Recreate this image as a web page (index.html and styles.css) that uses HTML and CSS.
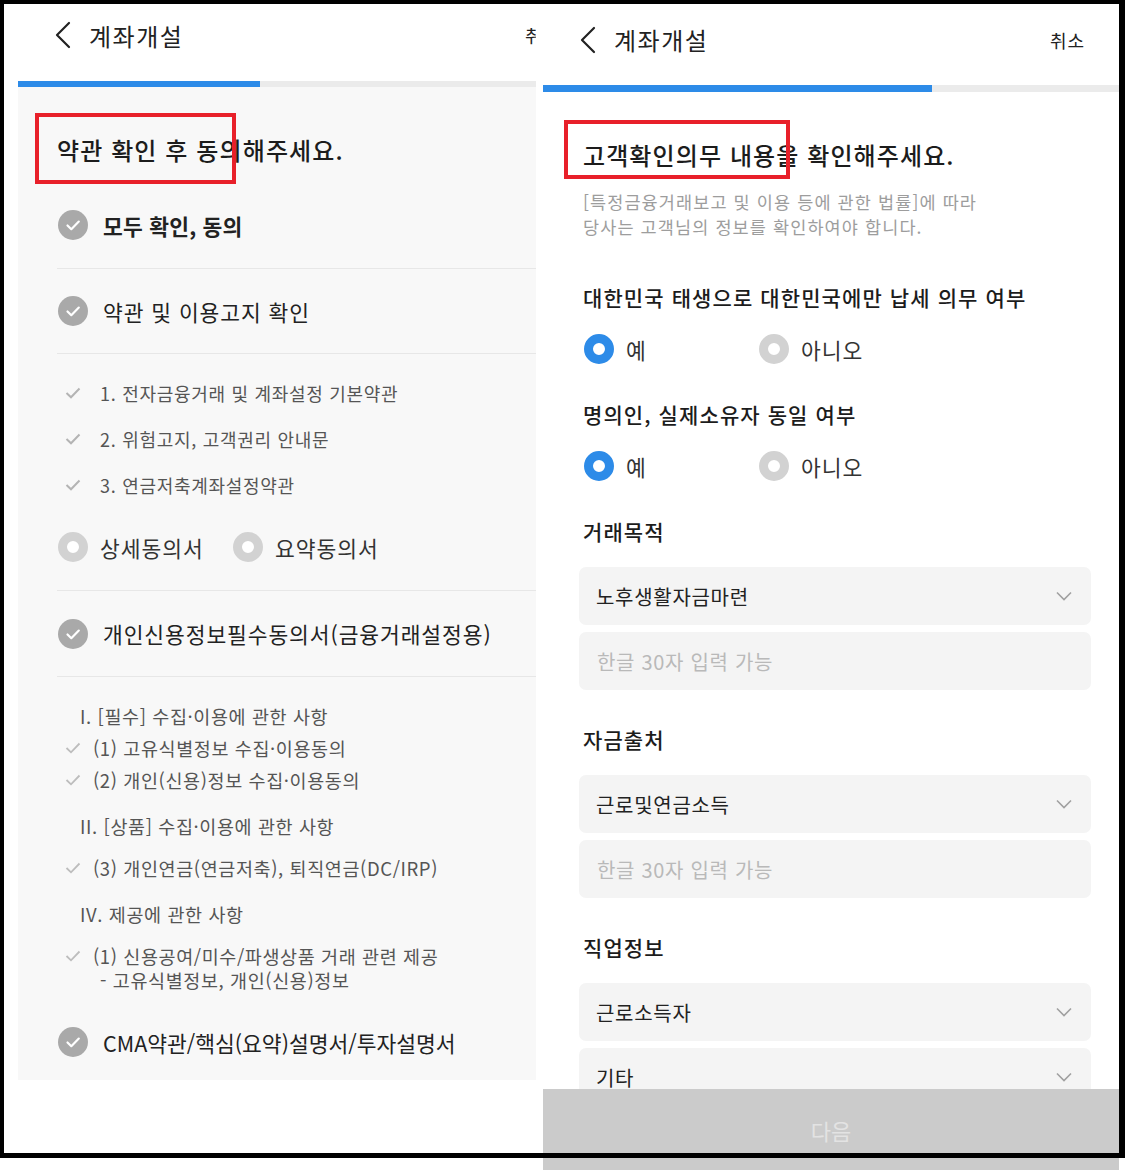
FILE: index.html
```html
<!DOCTYPE html>
<html lang="ko">
<head>
    <meta charset="UTF-8">
    <meta name="viewport" content="width=device-width, initial-scale=1.0">
    <title>계좌개설</title>
    <link rel="stylesheet" href="styles.css">
</head>
<body>
    <div class="stage">
        <div class="panels">

            <!-- 약관 동의 화면 -->
            <section class="phone phone-terms">
                <div class="phone-inner">
                    <header class="topbar">
                        <button class="back" aria-label="뒤로">
                            <svg width="18" height="28" viewBox="0 0 18 28"><path d="M15 2 L3 14 L15 26" fill="none" stroke="#222" stroke-width="2.2" stroke-linecap="round" stroke-linejoin="round"/></svg>
                        </button>
                        <h1 class="topbar-title">계좌개설</h1>
                        <span class="topbar-cancel">취소</span>
                    </header>
                    <div class="progress"><div class="progress-fill" style="width: 42%"></div></div>

                    <main class="terms">
                        <h2 class="page-title">약관 확인 후 동의해주세요.</h2>

                        <div class="agree-row agree-all">
                            <span class="check-circle"><svg width="30" height="30" viewBox="0 0 30 30"><circle cx="15" cy="15" r="15" fill="#a9a9a9"/><path d="M9.5 15.5 L13.3 19.2 L20.8 11.6" fill="none" stroke="#fff" stroke-width="2.2" stroke-linecap="round" stroke-linejoin="round"/></svg></span>
                            <span class="agree-text">모두 확인, 동의</span>
                        </div>

                        <div class="agree-row agree-notice">
                            <span class="check-circle"><svg width="30" height="30" viewBox="0 0 30 30"><circle cx="15" cy="15" r="15" fill="#a9a9a9"/><path d="M9.5 15.5 L13.3 19.2 L20.8 11.6" fill="none" stroke="#fff" stroke-width="2.2" stroke-linecap="round" stroke-linejoin="round"/></svg></span>
                            <span class="agree-text">약관 및 이용고지 확인</span>
                        </div>

                        <ul class="sub-list">
                            <li><svg class="tick" width="16" height="12" viewBox="0 0 16 12"><path d="M1.5 6 L6 10.3 L14.5 1.5" fill="none" stroke="#b4b4b4" stroke-width="2"/></svg>1. 전자금융거래 및 계좌설정 기본약관</li>
                            <li><svg class="tick" width="16" height="12" viewBox="0 0 16 12"><path d="M1.5 6 L6 10.3 L14.5 1.5" fill="none" stroke="#b4b4b4" stroke-width="2"/></svg>2. 위험고지, 고객권리 안내문</li>
                            <li><svg class="tick" width="16" height="12" viewBox="0 0 16 12"><path d="M1.5 6 L6 10.3 L14.5 1.5" fill="none" stroke="#b4b4b4" stroke-width="2"/></svg>3. 연금저축계좌설정약관</li>
                        </ul>

                        <div class="agree-row doc-type">
                            <label class="radio"><span class="radio-dot"></span>상세동의서</label>
                            <label class="radio"><span class="radio-dot"></span>요약동의서</label>
                        </div>

                        <div class="agree-row agree-credit">
                            <span class="check-circle"><svg width="30" height="30" viewBox="0 0 30 30"><circle cx="15" cy="15" r="15" fill="#a9a9a9"/><path d="M9.5 15.5 L13.3 19.2 L20.8 11.6" fill="none" stroke="#fff" stroke-width="2.2" stroke-linecap="round" stroke-linejoin="round"/></svg></span>
                            <span class="agree-text">개인신용정보필수동의서(금융거래설정용)</span>
                        </div>

                        <div class="detail-list">
                            <p class="detail-head">I. [필수] 수집·이용에 관한 사항</p>
                            <p class="detail-item"><svg class="tick" width="16" height="12" viewBox="0 0 16 12"><path d="M1.5 6 L6 10.3 L14.5 1.5" fill="none" stroke="#bdbdbd" stroke-width="1.8"/></svg>(1) 고유식별정보 수집·이용동의</p>
                            <p class="detail-item"><svg class="tick" width="16" height="12" viewBox="0 0 16 12"><path d="M1.5 6 L6 10.3 L14.5 1.5" fill="none" stroke="#bdbdbd" stroke-width="1.8"/></svg>(2) 개인(신용)정보 수집·이용동의</p>
                            <p class="detail-head gap">II. [상품] 수집·이용에 관한 사항</p>
                            <p class="detail-item gap-sm"><svg class="tick" width="16" height="12" viewBox="0 0 16 12"><path d="M1.5 6 L6 10.3 L14.5 1.5" fill="none" stroke="#bdbdbd" stroke-width="1.8"/></svg>(3) 개인연금(연금저축), 퇴직연금(DC/IRP)</p>
                            <p class="detail-head gap">IV. 제공에 관한 사항</p>
                            <div class="detail-item two-line">
                                <svg class="tick" width="16" height="12" viewBox="0 0 16 12"><path d="M1.5 6 L6 10.3 L14.5 1.5" fill="none" stroke="#bdbdbd" stroke-width="1.8"/></svg>
                                <div>
                                    <span class="line">(1) 신용공여/미수/파생상품 거래 관련 제공</span>
                                    <span class="line indent">- 고유식별정보, 개인(신용)정보</span>
                                </div>
                            </div>
                        </div>

                        <div class="agree-row agree-cma">
                            <span class="check-circle"><svg width="30" height="30" viewBox="0 0 30 30"><circle cx="15" cy="15" r="15" fill="#a9a9a9"/><path d="M9.5 15.5 L13.3 19.2 L20.8 11.6" fill="none" stroke="#fff" stroke-width="2.2" stroke-linecap="round" stroke-linejoin="round"/></svg></span>
                            <span class="agree-text">CMA약관/핵심(요약)설명서/투자설명서</span>
                        </div>
                    </main>
                </div>
            </section>

            <!-- 고객확인의무 화면 -->
            <section class="phone phone-kyc">
                <header class="topbar topbar-kyc">
                    <button class="back" aria-label="뒤로">
                        <svg width="18" height="28" viewBox="0 0 18 28"><path d="M15 2 L3 14 L15 26" fill="none" stroke="#222" stroke-width="2.2" stroke-linecap="round" stroke-linejoin="round"/></svg>
                    </button>
                    <h1 class="topbar-title">계좌개설</h1>
                    <span class="topbar-cancel">취소</span>
                </header>
                <div class="progress progress-kyc"><div class="progress-fill" style="width: 67.5%"></div></div>

                <main class="kyc">
                    <h2 class="page-title">고객확인의무 내용을 확인해주세요.</h2>
                    <p class="desc">[특정금융거래보고 및 이용 등에 관한 법률]에 따라<br>당사는 고객님의 정보를 확인하여야 합니다.</p>

                    <h3 class="label label-first">대한민국 태생으로 대한민국에만 납세 의무 여부</h3>
                    <div class="radio-group">
                        <label class="radio"><span class="radio-dot on"></span>예</label>
                        <label class="radio"><span class="radio-dot"></span>아니오</label>
                    </div>

                    <h3 class="label">명의인, 실제소유자 동일 여부</h3>
                    <div class="radio-group">
                        <label class="radio"><span class="radio-dot on"></span>예</label>
                        <label class="radio"><span class="radio-dot"></span>아니오</label>
                    </div>

                    <h3 class="label">거래목적</h3>
                    <div class="field select">노후생활자금마련<svg width="16" height="10" viewBox="0 0 16 10"><path d="M1 1.5 L8 8.5 L15 1.5" fill="none" stroke="#a0a0a0" stroke-width="1.6"/></svg></div>
                    <div class="field input">한글 30자 입력 가능</div>

                    <h3 class="label label-mid">자금출처</h3>
                    <div class="field select">근로및연금소득<svg width="16" height="10" viewBox="0 0 16 10"><path d="M1 1.5 L8 8.5 L15 1.5" fill="none" stroke="#a0a0a0" stroke-width="1.6"/></svg></div>
                    <div class="field input">한글 30자 입력 가능</div>

                    <h3 class="label label-mid">직업정보</h3>
                    <div class="field select">근로소득자<svg width="16" height="10" viewBox="0 0 16 10"><path d="M1 1.5 L8 8.5 L15 1.5" fill="none" stroke="#a0a0a0" stroke-width="1.6"/></svg></div>
                    <div class="field select">기타<svg width="16" height="10" viewBox="0 0 16 10"><path d="M1 1.5 L8 8.5 L15 1.5" fill="none" stroke="#a0a0a0" stroke-width="1.6"/></svg></div>
                </main>

                <button class="next-btn" disabled>다음</button>
            </section>
        </div>

        <!-- 강조 표시 -->
        <div class="mark mark-left"></div>
        <div class="mark mark-right"></div>
        <div class="frame"></div>
    </div>
</body>
</html>
```

FILE: styles.css
```css
/* General styles */
body {
    margin: 0;
    background-color: #fff;
    font-family: 'Noto Sans CJK KR', 'Noto Sans', sans-serif;
    color: #222;
}

.stage {
    position: relative;
    width: 1125px;
    height: 1175px;
    overflow: hidden;
}

.panels {
    display: flex;
    align-items: flex-start;
    gap: 7px;
    padding-left: 18px;
}

.phone {
    overflow: hidden;
    background-color: #fff;
}

.phone-terms {
    width: 518px;
}

.phone-inner {
    width: 576px;
}

.phone-kyc {
    position: relative;
    width: 576px;
    height: 1170px;
}

/* Top bar */
.topbar {
    display: flex;
    align-items: center;
    height: 70px;
    padding: 0 34px 0 36px;
}

.topbar-kyc {
    height: 79px;
}

.back {
    display: flex;
    background: none;
    border: none;
    padding: 0;
    margin-right: 17px;
    cursor: pointer;
}

.topbar-title {
    flex: 1;
    margin: 0;
    font-size: 24px;
    font-weight: 400;
    letter-spacing: 1.5px;
    color: #222;
}

.topbar-cancel {
    font-size: 18px;
    letter-spacing: 1px;
    color: #222;
}

.progress {
    height: 6px;
    margin-top: 11px;
    background-color: #ebebeb;
}

.progress-kyc {
    height: 7px;
    margin-top: 6px;
}

.progress-fill {
    height: 100%;
    background-color: #2d8be8;
}

.page-title {
    margin: 0;
    font-size: 24px;
    line-height: 34px;
    font-weight: 500;
    letter-spacing: 1.1px;
    color: #1c1c1c;
}

/* Terms screen */
.terms {
    background-color: #f8f8f8;
    padding: 46px 0 20px 39px;
}

.terms .page-title {
    margin-bottom: 15px;
}

.agree-row {
    display: flex;
    align-items: center;
    border-bottom: 1px solid #e7e7e7;
}

.check-circle {
    display: flex;
    margin: 0 15px 0 1px;
}

.agree-text {
    font-size: 21.5px;
    letter-spacing: 0.9px;
    color: #222;
}

.agree-all {
    height: 86px;
}

.agree-all .agree-text {
    font-weight: 700;
    letter-spacing: 0.2px;
}

.agree-notice {
    height: 84px;
}

.agree-credit {
    height: 85px;
}

.agree-cma {
    height: 36px;
    margin-top: 32px;
    border-bottom: none;
}

.agree-cma .agree-text {
    letter-spacing: 0;
}

.sub-list {
    list-style: none;
    margin: 0;
    padding: 16px 0 0;
}

.sub-list li {
    display: flex;
    align-items: center;
    height: 46px;
    font-size: 18px;
    letter-spacing: 0.7px;
    color: #555;
}

.tick {
    margin: 0 19px 0 8px;
    flex-shrink: 0;
}

.doc-type {
    height: 78px;
    padding-bottom: 4px;
}

.radio {
    display: flex;
    align-items: center;
    width: 175px;
    font-size: 21.5px;
    letter-spacing: 1px;
    color: #333;
}

.radio-dot {
    box-sizing: border-box;
    width: 30px;
    height: 30px;
    margin: 0 12px 0 1px;
    border: 9.5px solid #d2d2d2;
    border-radius: 50%;
    background-color: #fff;
}

.radio-dot.on {
    border-color: #2d8be8;
}

.detail-list {
    padding-top: 23px;
}

.detail-list p {
    margin: 0;
}

.detail-head {
    height: 32px;
    line-height: 32px;
    padding-left: 23px;
    font-size: 18.5px;
    letter-spacing: 0.6px;
    color: #555;
}

.detail-item {
    display: flex;
    align-items: center;
    height: 32px;
    font-size: 18.5px;
    letter-spacing: 0.6px;
    color: #555;
}

.detail-item .tick {
    margin-right: 12px;
}

.detail-head.gap {
    margin-top: 14px;
}

.detail-item.gap-sm {
    margin-top: 10px;
}

.detail-item.two-line {
    align-items: flex-start;
    height: auto;
    margin-top: 14px;
}

.two-line .tick {
    margin-top: 6px;
}

.two-line .line {
    display: block;
    line-height: 24px;
}

.two-line .indent {
    padding-left: 7px;
}

/* KYC screen */
.kyc {
    padding: 46px 28px 0 36px;
}

.kyc .page-title,
.kyc .desc,
.kyc .label,
.kyc .radio-group {
    padding-left: 4px;
}

.desc {
    margin: 17px 0 0;
    font-size: 17.5px;
    line-height: 25px;
    letter-spacing: 1.1px;
    color: #9d9d9d;
}

.label {
    margin: 32px 0 0;
    font-size: 21px;
    line-height: 30px;
    font-weight: 500;
    letter-spacing: 1.1px;
    color: #1c1c1c;
}

.label-first {
    margin-top: 43px;
}

.label-mid {
    margin-top: 34px;
}

.radio-group {
    display: flex;
    align-items: center;
    height: 36px;
    margin-top: 19px;
}

.radio-group + .label {
    margin-top: 32px;
}

.field {
    display: flex;
    align-items: center;
    justify-content: space-between;
    height: 58px;
    margin-top: 7px;
    padding: 0 19px 0 17px;
    border-radius: 7px;
    background-color: #f4f4f4;
    font-size: 20px;
    letter-spacing: 0.7px;
    color: #222;
}

.label + .field {
    margin-top: 21px;
}

.field.input {
    padding-left: 18px;
    color: #b9b9b9;
}

.next-btn {
    position: absolute;
    left: 0;
    bottom: 0;
    width: 100%;
    height: 81px;
    border: none;
    background-color: #cbcbcb;
    font-family: inherit;
    font-size: 22px;
    color: #e3e3e3;
}

/* Annotation marks and frame */
.mark {
    position: absolute;
    box-sizing: border-box;
    border: 4px solid #e8202a;
}

.mark-left {
    left: 35px;
    top: 113px;
    width: 201px;
    height: 71px;
}

.mark-right {
    left: 564px;
    top: 120px;
    width: 226px;
    height: 59px;
}

.frame {
    position: absolute;
    top: 0;
    left: 0;
    box-sizing: border-box;
    width: 1125px;
    height: 1158px;
    border-style: solid;
    border-color: #000;
    border-width: 4px 6px 5px 4px;
    pointer-events: none;
}
```
